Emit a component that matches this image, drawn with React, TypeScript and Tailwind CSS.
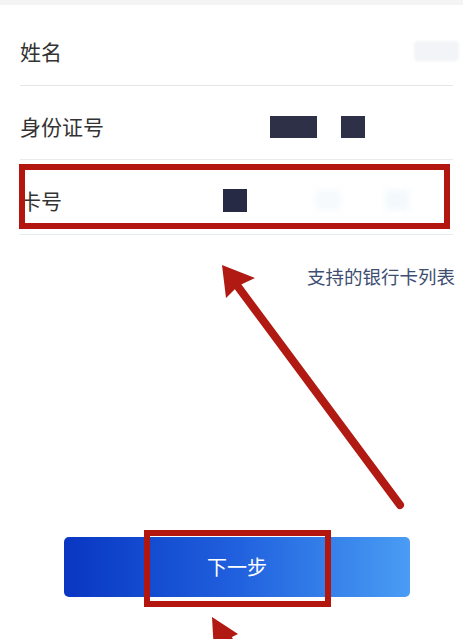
import React from "react";

export default function App() {
  const font = { fontFamily: '"Noto Sans CJK SC", "Noto Sans", sans-serif' };
  return (
    <div className="relative w-[463px] h-[639px] overflow-hidden bg-white" style={font}>
      <div className="h-[5px] bg-[#f4f4f4]" />
      {/* rows */}
      <div className="ml-[20px] mr-[10px]">
        <div className="h-[81px] pt-[12px] flex items-center justify-between border-b border-[#e6e6e6]">
          <span className="text-[21px] text-[#333333] leading-none">姓名</span>
          <span className="w-[45px] h-[20px] bg-[#f3f4f7] rounded-sm -mr-[6px] blur-[1px]" />
        </div>
        <div className="h-[74px] pt-[8px] flex items-center border-b border-[#e8ebee]">
          <span className="text-[21px] text-[#333333] leading-none w-[250px]">身份证号</span>
          <span className="w-[47px] h-[22px] bg-[#2e3048]" />
          <span className="w-[24px] h-[22px] bg-[#2e3048] ml-[24px]" />
        </div>
        <div className="h-[75px] pt-[6px] flex items-center border-b border-[#e3ecef]">
          <span className="text-[21px] text-[#333333] leading-none w-[203px]">卡号</span>
          <span className="w-[24px] h-[23px] bg-[#272a45]" />
          <span className="w-[26px] h-[20px] bg-[#f6fafc] ml-[68px] blur-[3px]" />
          <span className="w-[24px] h-[20px] bg-[#f3f9fc] ml-[44px] blur-[3px]" />
        </div>
      </div>
      <div className="flex justify-end pr-[8px] pt-[32px]">
        <span className="text-[18.5px] leading-none text-[#3e4e72]">支持的银行卡列表</span>
      </div>
      <div className="mt-[251px] ml-[64px] w-[346px] h-[60px] rounded-[5px] bg-gradient-to-r from-[#0a36c2] via-[#2160de] to-[#4a9cf4] flex items-center justify-center">
        <span className="text-[20px] text-white leading-none">下一步</span>
      </div>

      {/* annotations */}
      <div className="absolute left-[19px] top-[164px] w-[431px] h-[65px] border-[6px] border-[#b3150f]" />
      <div className="absolute left-[144px] top-[530px] w-[187px] h-[77px] border-[6px] border-[#b3150f]" />
      <svg className="absolute left-0 top-0" width="463" height="639" viewBox="0 0 463 639">
        <line x1="236" y1="284" x2="400" y2="505" stroke="#b01a12" strokeWidth="8" strokeLinecap="round" />
        <polygon points="222,265 255,278 238,286 226,298" fill="#b01a12" />
        <line x1="226" y1="636" x2="250" y2="670" stroke="#b01a12" strokeWidth="8" strokeLinecap="round" />
        <polygon points="212,617 238,634 228,639 214,652" fill="#b01a12" />
      </svg>
    </div>
  );
}
